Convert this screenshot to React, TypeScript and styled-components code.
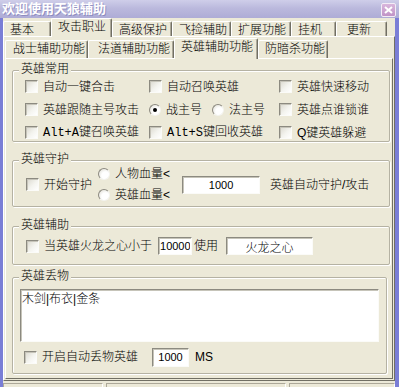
import React from "react";
import styled, { createGlobalStyle } from "styled-components";

const SANS = `"Liberation Sans", "Noto Sans CJK SC", sans-serif`;
const MONO = `"Liberation Mono", "Noto Sans CJK SC", monospace`;

const GlobalStyle = createGlobalStyle`
  html, body {
    margin: 0;
    padding: 0;
    background: #ece9d8;
  }
  body {
    font-family: ${SANS};
    font-size: 12px;
    color: #000;
  }
`;

interface ITab {
  label: string;
  width: number;
  pad?: number;
  active?: boolean;
}

const outerTabs: ITab[] = [
  { label: "基本", width: 48 },
  { label: "攻击职业", width: 61, active: true },
  { label: "高级保护", width: 60 },
  { label: "飞捡辅助", width: 59 },
  { label: "扩展功能", width: 60 },
  { label: "挂机", width: 45 },
  { label: "更新", width: 51, pad: 10 },
];

const innerTabs: ITab[] = [
  { label: "战士辅助功能", width: 83, pad: 7 },
  { label: "法道辅助功能", width: 86, pad: 9 },
  { label: "英雄辅助功能", width: 84, active: true },
  { label: "防暗杀功能", width: 70 },
];

const Check = ({ children }: { children: React.ReactNode }) => (
  <Option>
    <CheckBox />
    <span>{children}</span>
  </Option>
);

const Radio = ({ on, children }: { on?: boolean; children: React.ReactNode }) => (
  <Option>
    <RadioCircle $on={on} />
    <span>{children}</span>
  </Option>
);

export default function App() {
  return (
    <>
      <GlobalStyle />
      <Window>
        <TitleBar>
          <TitleText>欢迎使用天狼辅助</TitleText>
          <CloseButton>
            <svg width="9" height="8" viewBox="0 0 9 8">
              <path d="M1 1 L8 7 M8 1 L1 7" stroke="#fff" strokeWidth="2" />
            </svg>
          </CloseButton>
        </TitleBar>
        <Body>
          <TabStrip $h={18}>
            {outerTabs.map((t) => (
              <Tab key={t.label} $w={t.width} $pad={t.pad} $active={t.active} $base={15} $lift={4}>
                {t.label}
              </Tab>
            ))}
          </TabStrip>
          <OuterPanel>
            <TabStrip $h={21}>
              {innerTabs.map((t) => (
                <Tab key={t.label} $w={t.width} $pad={t.pad} $active={t.active} $base={18} $lift={3}>
                  {t.label}
                </Tab>
              ))}
            </TabStrip>
            <InnerPanel>
              <Frame $top={11} $h={72}>
                <FrameTitle>英雄常用</FrameTitle>
                <OptionGrid>
                  <Cell>
                    <Check>自动一键合击</Check>
                  </Cell>
                  <Cell>
                    <Check>自动召唤英雄</Check>
                  </Cell>
                  <Cell>
                    <Check>英雄快速移动</Check>
                  </Cell>
                  <Cell>
                    <Check>英雄跟随主号攻击</Check>
                  </Cell>
                  <Cell>
                    <RadioPair>
                      <Radio on>战主号</Radio>
                    </RadioPair>
                    <Radio>法主号</Radio>
                  </Cell>
                  <Cell>
                    <Check>英雄点谁锁谁</Check>
                  </Cell>
                  <Cell>
                    <Check>
                      <Mono>Alt+A</Mono>键召唤英雄
                    </Check>
                  </Cell>
                  <Cell>
                    <Check>
                      <Mono>Alt+S</Mono>键回收英雄
                    </Check>
                  </Cell>
                  <Cell>
                    <Check>Q键英雄躲避</Check>
                  </Cell>
                </OptionGrid>
              </Frame>

              <Frame $top={18} $h={47}>
                <FrameTitle>英雄守护</FrameTitle>
                <Row $h={37} $pl={13}>
                  <Check>开始守护</Check>
                  <RadioStack>
                    <Radio>人物血量&lt;</Radio>
                    <Radio>英雄血量&lt;</Radio>
                  </RadioStack>
                  <Field readOnly value="1000" $w={78} $h={18} $ml={12} $fs={11} $align="center" />
                  <Label $ml={10}>英雄自动守护/攻击</Label>
                </Row>
              </Frame>

              <Frame $top={19} $h={39}>
                <FrameTitle>英雄辅助</FrameTitle>
                <Row $h={28} $pl={13}>
                  <Check>当英雄火龙之心小于</Check>
                  <Field readOnly value="10000" $w={34} $h={18} $ml={6} $fs={11} $align="left" />
                  <Label $ml={2}>使用</Label>
                  <Field readOnly value="火龙之心" $w={87} $h={18} $ml={8} $fs={12} $align="center" />
                </Row>
              </Frame>

              <Frame $top={12} $h={97} $mr={3}>
                <FrameTitle>英雄丢物</FrameTitle>
                <DropList readOnly value="木剑|布衣|金条" />
                <Row $h={20} $pl={11} $mt={5}>
                  <Check>开启自动丢物英雄</Check>
                  <Field readOnly value="1000" $w={37} $h={19} $ml={14} $fs={11} $align="center" />
                  <Label $ml={6}>MS</Label>
                </Row>
              </Frame>
            </InnerPanel>
          </OuterPanel>
          <StatusBar>
            <StatusPane $w={98} />
            <StatusPane $w={178} />
            <StatusPane />
          </StatusBar>
        </Body>
      </Window>
    </>
  );
}

const Window = styled.div`
  width: 399px;
  height: 387px;
  display: flex;
  flex-direction: column;
  overflow: hidden;
  background: #ece9d8;
  font-family: ${SANS};
  font-size: 12px;
  font-weight: 300;
  line-height: 14px;
`;

const TitleBar = styled.div`
  flex: none;
  height: 18px;
  display: flex;
  align-items: center;
  justify-content: space-between;
  padding: 0 3px 0 2px;
  background: linear-gradient(to bottom, #cfcee9 0%, #bbb9dd 45%, #aeacd6 100%);
`;

const TitleText = styled.span`
  color: #fff;
  font-weight: bold;
  font-size: 13px;
  line-height: 18px;
  text-shadow: 1px 1px 0 rgba(96, 94, 160, 0.45);
`;

const CloseButton = styled.div`
  box-sizing: border-box;
  width: 15px;
  height: 14px;
  margin-top: 2px;
  display: flex;
  align-items: center;
  justify-content: center;
  border: 1px solid #f3ecf6;
  border-radius: 2px;
  background: linear-gradient(to bottom, #d9b6dc, #c093c6);
`;

const Body = styled.div`
  flex: 1;
  min-height: 0;
  display: flex;
  flex-direction: column;
  border-left: 3px solid #7a7ed6;
  border-right: 4px solid #7a7ed6;
`;

const TabStrip = styled.div<{ $h: number }>`
  flex: none;
  height: ${(p) => p.$h}px;
  display: flex;
  align-items: flex-end;
  position: relative;
  z-index: 1;
`;

const Tab = styled.div<{ $w: number; $pad?: number; $active?: boolean; $base: number; $lift: number }>`
  box-sizing: border-box;
  flex: none;
  width: ${(p) => p.$w}px;
  height: ${(p) => (p.$active ? p.$base + p.$lift : p.$base)}px;
  margin-bottom: ${(p) => (p.$active ? -1 : 0)}px;
  padding: 2px 0 0 ${(p) => p.$pad ?? 6}px;
  border-top: 1px solid #fff;
  border-left: 1px solid #fff;
  border-right: 1px solid #716f64;
  border-radius: 2px 2px 0 0;
  box-shadow: inset -1px 0 0 #aca899;
  background: #ece9d8;
  white-space: nowrap;
  line-height: 13px;
  position: relative;
  z-index: ${(p) => (p.$active ? 2 : 1)};
`;

const OuterPanel = styled.div`
  flex: 1;
  min-height: 0;
  display: flex;
  flex-direction: column;
  border: 1px solid;
  border-color: #fff #716f64 #716f64 #fff;
  padding: 0 1px 1px 1px;
`;

const InnerPanel = styled.div`
  flex: 1;
  min-height: 0;
  display: flex;
  flex-direction: column;
  border: 1px solid;
  border-color: #fff #716f64 #716f64 #fff;
  padding: 0 2px 0 6px;
`;

const Frame = styled.div<{ $top: number; $h: number; $mr?: number }>`
  box-sizing: border-box;
  flex: none;
  height: ${(p) => p.$h}px;
  margin-top: ${(p) => p.$top}px;
  margin-right: ${(p) => p.$mr ?? 0}px;
  display: flex;
  flex-direction: column;
  border: 1px solid #b5b2a3;
  border-radius: 2px;
  box-shadow: inset 1px 1px 0 #fff, 1px 1px 0 #fff;
`;

const FrameTitle = styled.div`
  align-self: flex-start;
  height: 14px;
  margin: -9px 0 0 6px;
  padding: 0 2px;
  line-height: 14px;
  background: #ece9d8;
`;

const OptionGrid = styled.div`
  display: grid;
  grid-template-columns: 124px 130px 1fr;
  grid-auto-rows: 21px;
  row-gap: 2px;
  padding-left: 12px;
`;

const Cell = styled.div`
  display: flex;
  align-items: center;
`;

const RadioPair = styled.div`
  width: 63px;
  display: flex;
  align-items: center;
`;

const Option = styled.label`
  display: inline-flex;
  align-items: center;
  gap: 5px;
  white-space: nowrap;
  line-height: 14px;
`;

const Mono = styled.span`
  font-family: ${MONO};
`;

const CheckBox = styled.span`
  box-sizing: border-box;
  flex: none;
  width: 13px;
  height: 13px;
  border: 1px solid;
  border-color: #8c8a80 #fbfbf8 #fbfbf8 #8c8a80;
  background: linear-gradient(135deg, #dad8ce 0%, #f4f4ef 55%, #fff 100%);
  box-shadow: inset 1px 1px 0 #c6c4b9;
`;

const RadioCircle = styled.span<{ $on?: boolean }>`
  box-sizing: border-box;
  flex: none;
  width: 12px;
  height: 12px;
  border-radius: 50%;
  border: 1px solid;
  border-color: #8c8a80 #f4f4f0 #f4f4f0 #8c8a80;
  background: radial-gradient(circle at 65% 65%, #fff 40%, #d9d7cc 100%);
  display: flex;
  align-items: center;
  justify-content: center;

  &::after {
    content: "";
    width: 4px;
    height: 4px;
    border-radius: 50%;
    background: ${(p) => (p.$on ? "#000" : "transparent")};
  }
`;

const Row = styled.div<{ $h: number; $pl: number; $mt?: number }>`
  display: flex;
  align-items: center;
  height: ${(p) => p.$h}px;
  padding-left: ${(p) => p.$pl}px;
  margin-top: ${(p) => p.$mt ?? 0}px;
`;

const RadioStack = styled.div`
  display: flex;
  flex-direction: column;
  gap: 1px;
  margin-left: 6px;

  > label {
    height: 20px;
  }
`;

const Label = styled.span<{ $ml: number }>`
  margin-left: ${(p) => p.$ml}px;
  white-space: nowrap;
`;

const Field = styled.input<{ $w: number; $h: number; $ml: number; $fs: number; $align: string }>`
  box-sizing: border-box;
  flex: none;
  width: ${(p) => p.$w}px;
  height: ${(p) => p.$h}px;
  margin: 0 0 0 ${(p) => p.$ml}px;
  padding: 0 1px;
  border: 1px solid;
  border-color: #8c8a80 #fbfbf8 #fbfbf8 #8c8a80;
  box-shadow: inset 1px 1px 0 #c6c4b9;
  background: #fff;
  color: #000;
  font-family: ${SANS};
  font-size: ${(p) => p.$fs}px;
  font-weight: 300;
  text-align: ${(p) => p.$align};
  outline: none;
`;

const DropList = styled.textarea`
  box-sizing: border-box;
  flex: none;
  width: 359px;
  height: 53px;
  margin: 6px 0 0 7px;
  padding: 2px 1px;
  border: 1px solid;
  border-color: #8c8a80 #fbfbf8 #fbfbf8 #8c8a80;
  box-shadow: inset 1px 1px 0 #c6c4b9;
  background: #fff;
  color: #000;
  font-family: ${SANS};
  font-size: 12px;
  font-weight: 300;
  line-height: 14px;
  resize: none;
  outline: none;
  overflow: hidden;
`;

const StatusBar = styled.div`
  box-sizing: border-box;
  flex: none;
  height: 6px;
  padding-top: 2px;
  display: flex;
  gap: 3px;
`;

const StatusPane = styled.div<{ $w?: number }>`
  ${(p) => (p.$w ? `width: ${p.$w}px; flex: none;` : "flex: 1;")}
  border-top: 1px solid #aca899;
  border-left: 1px solid #aca899;
  border-right: 1px solid #fff;
`;
